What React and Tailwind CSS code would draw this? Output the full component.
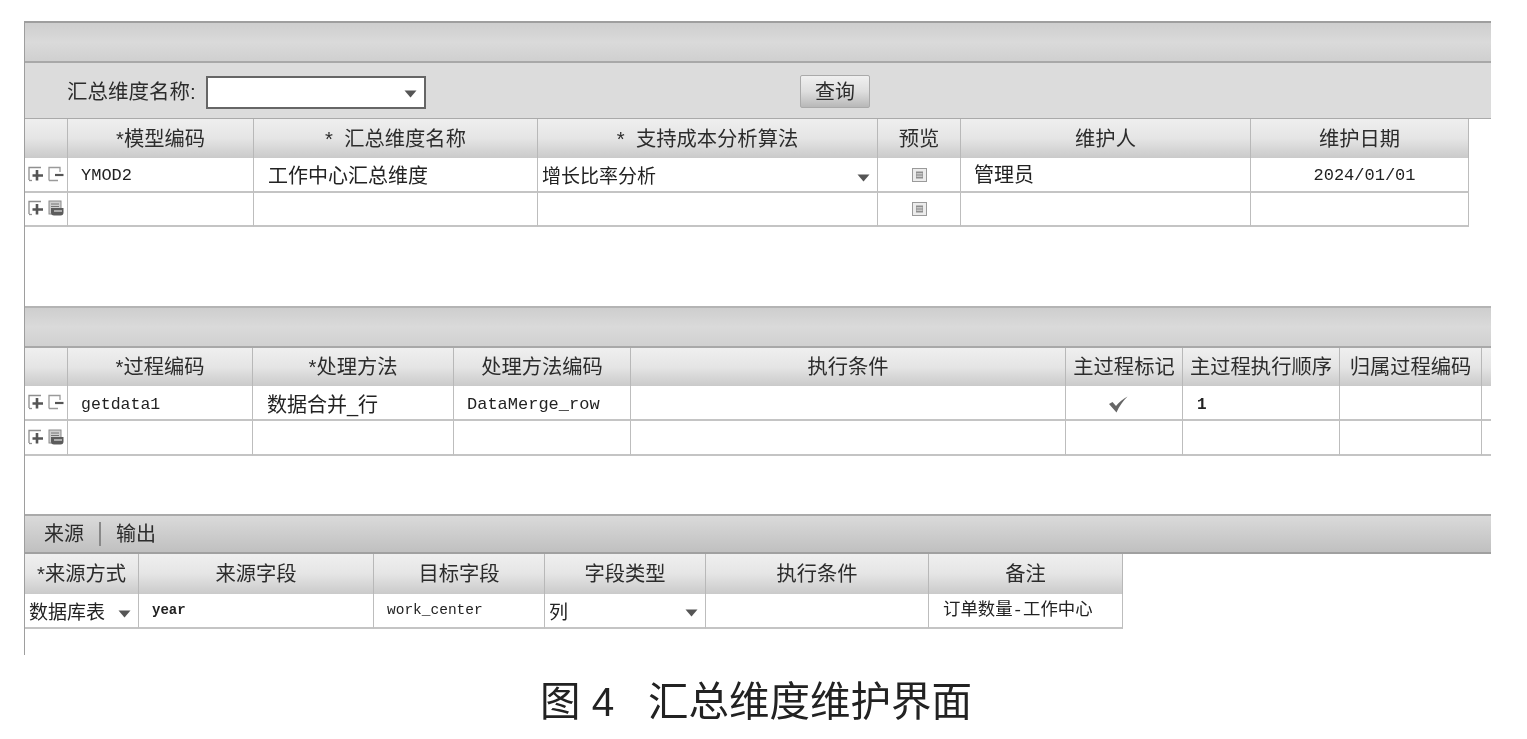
import React from "react";

const cjk = "font-['Liberation_Sans','Noto_Sans_CJK_SC',sans-serif]";
const mono = "font-['Liberation_Mono','Noto_Sans_CJK_SC',monospace]";

const AddIcon = () => (
  <svg width="16" height="16" viewBox="0 0 16 16" fill="none">
    <path d="M1 14V1.5h12" stroke="#8f8f8f" strokeWidth="1.3" />
    <path d="M1 14.5h3" stroke="#8f8f8f" strokeWidth="1.3" />
    <path d="M9 4v10.5M4.5 9.5h10.5" stroke="#555" strokeWidth="2.6" />
  </svg>
);

const RemoveIcon = () => (
  <svg width="16" height="16" viewBox="0 0 16 16" fill="none">
    <path d="M1 14.5V1.5h11V6M1 14.5h9" stroke="#9a9a9a" strokeWidth="1.3" />
    <path d="M7 9h8.5" stroke="#555" strokeWidth="2.2" />
  </svg>
);

const DeleteIcon = () => (
  <svg width="16" height="16" viewBox="0 0 16 16" fill="none">
    <rect x="1" y="1" width="12" height="13" fill="#cfcfcf" stroke="#8a8a8a" />
    <path d="M3 4h8M3 6.5h8" stroke="#777" />
    <path d="M3 8h12.5v4.5a3 3 0 0 1-3 3H6a3 3 0 0 1-3-3z" fill="#5c5c5c" />
    <path d="M6 11h8" stroke="#cfcfcf" strokeWidth="1.4" />
  </svg>
);

const DocIcon = () => (
  <svg width="15" height="14" viewBox="0 0 15 14" fill="none">
    <rect x="0.5" y="0.5" width="14" height="13" fill="#ececec" stroke="#9a9a9a" />
    <rect x="4" y="3.5" width="7" height="7" fill="#8e8e8e" />
    <path d="M4.5 5.5h6M4.5 7h6M4.5 8.5h6" stroke="#e0e0e0" strokeWidth="0.7" />
  </svg>
);

const Arrow = () => (
  <svg width="13" height="8" viewBox="0 0 13 8">
    <path d="M0.5 0.5h12L6.5 7.5z" fill="#555" />
  </svg>
);

const Check = () => (
  <svg width="20" height="17" viewBox="0 0 20 17" fill="none">
    <path d="M1 8 4.5 6 8 10C11 6 15 3 19.5 0.5 15 5 11 10.5 8.5 16.5z" fill="#666" />
  </svg>
);

const HeaderRow = ({ cols, h, textPad = "" }) => (
  <div className={`flex shrink-0 ${h}`}>
    {cols.map((c, i) => (
      <div
        key={i}
        className={`${c.w} ${textPad} shrink-0 flex items-center justify-center border-r border-[#b8b8b8] bg-gradient-to-b from-[#efefef] via-[#e5e5e5] to-[#cacaca] text-[20.3px] text-[#2c2c2c] whitespace-nowrap overflow-hidden`}
      >
        {c.label}
      </div>
    ))}
  </div>
);

const BodyRow = ({ cols, cells, h }) => (
  <div className={`flex shrink-0 ${h}`}>
    {cols.map((c, i) => (
      <div
        key={i}
        className={`${c.w} shrink-0 flex items-center border-r border-b-2 border-r-[#bdbdbd] border-b-[#c4c4c4] bg-white text-[#222] whitespace-nowrap overflow-hidden ${cells[i]?.cls || ""}`}
      >
        {cells[i]?.body}
      </div>
    ))}
  </div>
);

const editCell = (second) => ({
  cls: "gap-[4px] pl-[3px] pb-[2px]",
  body: (
    <>
      <AddIcon />
      {second}
    </>
  ),
});

const docCell = { cls: "justify-center", body: <DocIcon /> };

const modelCols = [
  { w: "w-[43px]", label: "" },
  { w: "w-[186px]", label: "*模型编码" },
  { w: "w-[284px]", label: "*\u00a0\u00a0汇总维度名称" },
  { w: "w-[340px]", label: "*\u00a0\u00a0支持成本分析算法" },
  { w: "w-[83px]", label: "预览" },
  { w: "w-[290px]", label: "维护人" },
  { w: "w-[218px]", label: "维护日期" },
];

const processCols = [
  { w: "w-[43px]", label: "" },
  { w: "w-[185px]", label: "*过程编码" },
  { w: "w-[201px]", label: "*处理方法" },
  { w: "w-[177px]", label: "处理方法编码" },
  { w: "w-[435px]", label: "执行条件" },
  { w: "w-[117px]", label: "主过程标记" },
  { w: "w-[157px]", label: "主过程执行顺序" },
  { w: "w-[142px]", label: "归属过程编码" },
  { w: "w-[10px]", label: "" },
];

const sourceCols = [
  { w: "w-[114px]", label: "*来源方式" },
  { w: "w-[235px]", label: "来源字段" },
  { w: "w-[171px]", label: "目标字段" },
  { w: "w-[161px]", label: "字段类型" },
  { w: "w-[223px]", label: "执行条件" },
  { w: "w-[194px]", label: "备注" },
];

const modelRow = [
  editCell(<RemoveIcon />),
  { cls: `pl-[13px] pt-[2px] text-[17px] ${mono}`, body: "YMOD2" },
  { cls: "pl-[14px] pt-[3px] text-[20px]", body: "工作中心汇总维度" },
  {
    cls: "pl-[4px] pr-[7px] pt-[6px] justify-between text-[19px]",
    body: (
      <>
        <span>增长比率分析</span>
        <Arrow />
      </>
    ),
  },
  docCell,
  { cls: "pl-[13px] pt-[1px] text-[20px]", body: "管理员" },
  { cls: `justify-center pl-[10px] pt-[3px] text-[17px] ${mono}`, body: "2024/01/01" },
];

const processRow = [
  editCell(<RemoveIcon />),
  { cls: `pl-[13px] pt-[5px] text-[16.5px] ${mono}`, body: "getdata1" },
  { cls: "pl-[14px] pt-[4px] text-[20px]", body: "数据合并_行" },
  { cls: `pl-[13px] pt-[5px] text-[17px] ${mono}`, body: "DataMerge_row" },
  {},
  { cls: "justify-center pr-[13px] pt-[3px]", body: <Check /> },
  { cls: `pl-[14px] pt-[5px] text-[16px] font-bold ${mono}`, body: "1" },
];

const sourceRow = [
  {
    cls: "pl-[4px] pr-[7px] pt-[6px] justify-between text-[19px]",
    body: (
      <>
        <span>数据库表</span>
        <Arrow />
      </>
    ),
  },
  { cls: `pl-[13px] text-[14px] font-bold ${mono}`, body: "year" },
  { cls: `pl-[13px] text-[14.5px] ${mono}`, body: "work_center" },
  {
    cls: "pl-[4px] pr-[7px] pt-[5px] justify-between text-[19px]",
    body: (
      <>
        <span>列</span>
        <Arrow />
      </>
    ),
  },
  {},
  { cls: `pl-[14px] pt-[1px] text-[17.4px] ${mono}`, body: "订单数量-工作中心" },
];

const TitleBar = ({ h }) => (
  <div className={`${h} shrink-0 bg-gradient-to-b from-[#cecece] via-[#dadada] to-[#d0d0d0] border-b-2 border-[#a8a8a8]`} />
);

export default function App() {
  return (
    <div className={`w-[1527px] h-[739px] bg-white overflow-hidden blur-[0.4px] ${cjk}`}>
      <div className="pt-[21px] pl-[24px]">
        <div className="w-[1467px] h-[634px] flex flex-col border-l border-t-2 border-[#9e9e9e] overflow-hidden">
          <TitleBar h="h-[40px]" />

          <div className="h-[56px] shrink-0 flex items-center relative bg-[#dcdcdc] border-b border-[#aaaaaa] pl-[42px] pt-[4px] text-[20.5px] text-[#2c2c2c]">
            <span className="w-[139px]">汇总维度名称:</span>
            <div className="w-[220px] h-[33px] flex items-center justify-end pr-[7px] pt-[2px] bg-white border-2 border-[#666]">
              <Arrow />
            </div>
            <button className="absolute left-[775px] top-[12px] w-[70px] h-[33px] rounded-[2px] border border-[#aaa] bg-gradient-to-b from-[#f0f0f0] via-[#dedede] to-[#b8b8b8] text-[20px] text-[#2c2c2c]">
              查询
            </button>
          </div>

          <div className="h-[187px] shrink-0 flex flex-col">
            <HeaderRow cols={modelCols} h="h-[39px]" textPad="pt-[1px]" />
            <BodyRow cols={modelCols} cells={modelRow} h="h-[35px]" />
            <BodyRow
              cols={modelCols}
              cells={[editCell(<DeleteIcon />), {}, {}, {}, docCell]}
              h="h-[34px]"
            />
          </div>

          <div className="h-[42px] shrink-0 border-t-2 border-[#b4b4b4]">
            <TitleBar h="h-[40px]" />
          </div>

          <div className="h-[166px] shrink-0 flex flex-col">
            <HeaderRow cols={processCols} h="h-[38px]" />
            <BodyRow cols={processCols} cells={processRow} h="h-[35px]" />
            <BodyRow
              cols={processCols}
              cells={[editCell(<DeleteIcon />)]}
              h="h-[35px]"
            />
          </div>

          <div className="h-[40px] shrink-0 flex items-center gap-[15px] pl-[19px] bg-gradient-to-b from-[#dadada] to-[#c0c0c0] border-t-2 border-b-2 border-t-[#aaaaaa] border-b-[#a0a0a0] text-[20px] text-[#2c2c2c]">
            <span>来源</span>
            <span className="w-[2px] h-[24px] bg-[#888]" />
            <span>输出</span>
          </div>

          <HeaderRow cols={sourceCols} h="h-[40px]" />
          <BodyRow cols={sourceCols} cells={sourceRow} h="h-[35px]" />
        </div>

        <div className="w-[1464px] h-[90px] flex items-center justify-center pt-[4px] text-[40.5px] text-[#222]">
          <span className="whitespace-pre">图 4   汇总维度维护界面</span>
        </div>
      </div>
    </div>
  );
}
